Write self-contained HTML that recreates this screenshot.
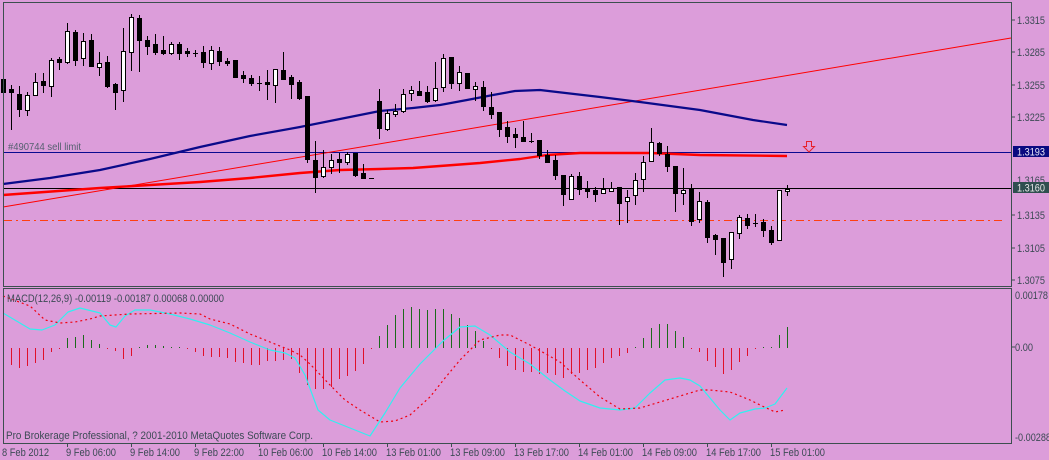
<!DOCTYPE html>
<html><head><meta charset="utf-8"><style>
html,body{margin:0;padding:0;background:#DC9DDA;width:1049px;height:460px;overflow:hidden}
svg{display:block}
text{font-family:"Liberation Sans",sans-serif;}
</style></head><body>
<svg id="s" width="1049" height="460" xmlns="http://www.w3.org/2000/svg">
<rect width="1049" height="460" fill="#DC9DDA"/>
<g id="g"></g>
<rect x="3.5" y="2.5" width="1008" height="284" fill="none" stroke="#3C4F4F"/>
<rect x="3.5" y="288.5" width="1008" height="155" fill="none" stroke="#3C4F4F"/>
<g font-size="11" fill="#3C4A55" lengthAdjust="spacingAndGlyphs">
<text x="1017" y="24" textLength="28" lengthAdjust="spacingAndGlyphs">1.3315</text>
<text x="1017" y="56" textLength="28" lengthAdjust="spacingAndGlyphs">1.3285</text>
<text x="1017" y="89" textLength="28" lengthAdjust="spacingAndGlyphs">1.3255</text>
<text x="1017" y="121" textLength="28" lengthAdjust="spacingAndGlyphs">1.3225</text>
<text x="1017" y="184" textLength="28" lengthAdjust="spacingAndGlyphs">1.3165</text>
<text x="1017" y="219" textLength="28" lengthAdjust="spacingAndGlyphs">1.3135</text>
<text x="1017" y="252" textLength="28" lengthAdjust="spacingAndGlyphs">1.3105</text>
<text x="1017" y="284" textLength="28" lengthAdjust="spacingAndGlyphs">1.3075</text>
<text x="1015" y="299" textLength="33" lengthAdjust="spacingAndGlyphs">0.00178</text>
<text x="1015" y="351" textLength="18" lengthAdjust="spacingAndGlyphs">0.00</text>
<text x="1015" y="441" textLength="36" lengthAdjust="spacingAndGlyphs">-0.00288</text>
</g>
<g stroke="#3C4F4F"><line x1="1012" y1="20" x2="1015" y2="20"/><line x1="1012" y1="52" x2="1015" y2="52"/><line x1="1012" y1="85" x2="1015" y2="85"/><line x1="1012" y1="117" x2="1015" y2="117"/><line x1="1012" y1="215" x2="1015" y2="215"/><line x1="1012" y1="248" x2="1015" y2="248"/><line x1="1012" y1="280" x2="1015" y2="280"/><line x1="1012" y1="347" x2="1015" y2="347"/></g>
<rect x="1013" y="146" width="36" height="11" fill="#0A0A80"/>
<text x="1017" y="155.5" font-size="11" textLength="28" lengthAdjust="spacingAndGlyphs" fill="#E8E8F8">1.3193</text>
<rect x="1013" y="182" width="36" height="11" fill="#2F4F4F"/>
<text x="1017" y="191.5" font-size="11" textLength="28" lengthAdjust="spacingAndGlyphs" fill="#E8E8E8">1.3160</text>
<text x="8" y="150" font-size="10.5" textLength="73" lengthAdjust="spacingAndGlyphs" fill="#556070">#490744 sell limit</text>
<text x="7" y="302" font-size="11" textLength="217" lengthAdjust="spacingAndGlyphs" fill="#3C4A55">MACD(12,26,9) -0.00119 -0.00187 0.00068 0.00000</text>
<text x="6" y="439" font-size="11" textLength="307" lengthAdjust="spacingAndGlyphs" fill="#3C4A55">Pro Brokerage Professional, ? 2001-2010 MetaQuotes Software Corp.</text>
<path d="M806.5 141.5h5v5h3l-5.5 5.5l-5.5-5.5h3z" fill="none" stroke="#E8202A"/>
<g id="t" font-size="11" fill="#3C4A55"></g>
</svg>
<script>
var g=document.getElementById('g'),h='';
h+='<line x1="4" y1="152.5" x2="1011" y2="152.5" stroke="#0A0A90"/>';
h+='<line x1="4" y1="188.5" x2="1011" y2="188.5" stroke="#000"/>';
h+='<line x1="4" y1="220.5" x2="1005" y2="220.5" stroke="#FF4010" stroke-dasharray="8,4,2,4"/>';
h+='<line x1="3" y1="207" x2="1011" y2="38" stroke="#FF0000" stroke-width="1"/>';
function pl(pts,c,w,d){return '<polyline fill="none" stroke-linejoin="round" stroke="'+c+'" stroke-width="'+w+'" '+(d?'stroke-dasharray="'+d+'"':'')+' points="'+pts.map(p=>p.join(',')).join(' ')+'"/>';}
var blue=[[3,184],[50,178],[100,170],[150,159],[200,147],[250,136],[300,127],[350,117],[380,111],[413,108],[440,105],[467,100],[493,95],[515,91],[540,90],[557,92],[600,97],[640,102],[700,110],[753,120],[787,125]];
var red=[[3,195],[100,188],[150,185],[200,182],[250,178],[300,173],[340,170],[380,169],[413,168],[440,166],[480,163],[520,159],[547,155],[580,153],[650,153],[700,155],[787,156]];
h+=pl(blue,'#0A0A8A',2.2)+pl(red,'#FF0000',2.4);
var C=[[79,92,78,92,0],[89,92,85,130,0],[94,109,86,117,0],[95,110,92,116,1],[82,95,73,95,1],[81,85,73,93,0],[60,86,58,97,1],[59,62,57,70,0],[31,62,23,64,1],[32,60,30,66,0],[41,58,33,66,1],[40,66,34,66,0],[63,67,52,76,1],[62,86,56,88,0],[84,92,83,110,0],[51,90,28,102,1],[17,52,14,71,1],[18,40,15,72,0],[40,46,36,55,0],[44,52,34,55,0],[50,53,36,55,0],[44,53,42,55,1],[44,53,42,60,0],[51,53,48,57,0],[53,53,50,57,0],[52,62,46,68,0],[50,63,46,70,1],[51,61,47,66,0],[61,63,58,66,0],[60,77,60,78,0],[75,78,71,83,0],[78,83,75,86,0],[83,83,76,91,0],[82,84,70,100,0],[69,85,69,103,1],[70,79,52,79,0],[77,84,75,99,0],[82,98,80,100,0],[96,159,96,163,0],[160,177,141,193,0],[167,176,150,178,1],[160,167,154,174,1],[159,162,153,173,0],[154,162,152,165,1],[153,175,153,177,0],[173,178,164,179,0],[178,178,178,178,0],[101,128,89,139,0],[113,129,110,131,1],[111,114,104,117,1],[94,111,89,113,1],[90,93,86,101,1],[91,95,81,96,0],[92,101,86,103,0],[88,100,62,102,1],[58,87,54,92,1],[57,83,57,89,0],[72,83,66,91,1],[73,88,73,88,0],[86,89,82,101,1],[87,106,81,111,0],[107,114,92,119,0],[112,129,112,137,0],[127,136,121,143,0],[134,137,128,148,0],[137,141,121,142,0],[141,141,133,143,0],[140,155,140,159,0],[155,162,150,162,0],[160,175,155,180,0],[175,194,175,206,0],[176,199,174,200,1],[176,189,172,195,0],[188,191,181,198,0],[190,194,187,202,0],[189,193,178,194,1],[188,191,182,192,1],[187,203,187,225,0],[197,201,190,223,1],[180,195,173,205,1],[162,179,156,192,1],[142,161,128,161,1],[143,153,142,156,0],[154,166,146,172,0],[166,193,166,212,0],[190,193,168,205,1],[188,221,184,226,0],[201,219,192,223,1],[202,237,200,243,0],[235,239,234,255,0],[238,262,238,277,0],[232,259,232,269,1],[217,233,215,239,1],[218,225,214,229,0],[223,223,214,227,0],[222,230,219,237,0],[230,242,226,245,0],[190,240,190,240,1],[189,191,185,196,1]];
C.forEach(function(c,k){var x=Math.round(3+8*k)+0.5;
h+='<line x1="'+x+'" y1="'+c[2]+'" x2="'+x+'" y2="'+c[3]+'" stroke="#000"/>';
if(c[1]-c[0]<1){h+='<line x1="'+(x-2.5)+'" y1="'+(c[0]+0.5)+'" x2="'+(x+2.5)+'" y2="'+(c[0]+0.5)+'" stroke="#000"/>';}
else h+='<rect x="'+(x-2)+'" y="'+(c[0]+0.5)+'" width="4" height="'+(c[1]-c[0])+'" fill="'+(c[4]?'#fff':'#000')+'" stroke="#000"/>';});
var H=[365,365,368,366,363,360,352,349,338,337,335,340,344,348,351,359,356,347,345,345,346,347,347,348,352,356,357,357,358,362,363,365,365,361,361,360,359,373,385,389,389,387,379,376,371,364,348,336,325,315,309,307,309,310,309,309,314,318,325,331,341,348,358,366,370,372,372,374,373,375,378,374,373,370,368,363,358,356,353,347,338,328,324,324,331,337,348,352,361,367,374,370,362,356,349,347,347,335,327];
H.forEach(function(v,k){var x=Math.round(3+8*k)+0.5;if(v==348)v=349;
h+='<line x1="'+x+'" y1="348" x2="'+x+'" y2="'+v+'" stroke="'+(v>348?'#E0102A':'#1C6A1C')+'"/>';});
var cy=[[3,313],[30,329],[42,330],[55,325],[68,312],[80,308],[100,313],[110,325],[116,327],[125,316],[135,310],[150,310],[170,314],[190,319],[210,325],[230,333],[250,342],[270,350],[285,353],[295,358],[305,375],[318,410],[330,420],[345,426],[360,432],[370,436],[385,413],[400,388],[420,364],[435,349],[443,341],[460,327],[475,326],[490,335],[510,352],[530,364],[550,380],[565,391],[580,401],[600,408],[620,410],[635,408],[650,393],[665,380],[680,378],[690,380],[700,386],[710,398],[720,410],[730,420],[740,413],[755,409],[765,408],[775,404],[787,388]];
var sg=[[3,296],[30,306],[45,320],[60,323],[75,322],[90,319],[100,316],[130,314],[180,313],[200,314],[210,319],[230,324],[250,334],[270,342],[290,350],[300,355],[310,364],[330,385],[345,400],[360,410],[380,422],[395,421],[410,415],[430,397],[445,378],[460,360],[480,340],[500,335],[510,335],[530,345],[560,362],[580,380],[600,397],[620,409],[640,408],[660,402],[680,396],[700,390],[710,390],[730,392],[750,400],[760,405],[775,412],[785,410]];
h+=pl(cy,'#30F0F0',1.2)+pl(sg,'#F00010',1.2,'2,3');
g.innerHTML=h;
var L=[['8 Feb 2012',2,null,47],['9 Feb 06:00',66,67,50],['9 Feb 14:00',130,131,50],['9 Feb 22:00',194,195,50],['10 Feb 06:00',258,259,55],['10 Feb 14:00',322,323,55],['13 Feb 01:00',386,387,55],['13 Feb 09:00',450,451,55],['13 Feb 17:00',514,515,55],['14 Feb 01:00',578,579,55],['14 Feb 09:00',642,643,55],['14 Feb 17:00',706,707,55],['15 Feb 01:00',770,771,55]];
var t='';L.forEach(function(l){t+='<text x="'+l[1]+'" y="456" textLength="'+l[3]+'" lengthAdjust="spacingAndGlyphs">'+l[0]+'</text>';if(l[2])t+='<line x1="'+(l[2]+0.5)+'" y1="444" x2="'+(l[2]+0.5)+'" y2="447" stroke="#3C4F4F"/>';});
document.getElementById('t').innerHTML=t;
</script>
</body></html>
